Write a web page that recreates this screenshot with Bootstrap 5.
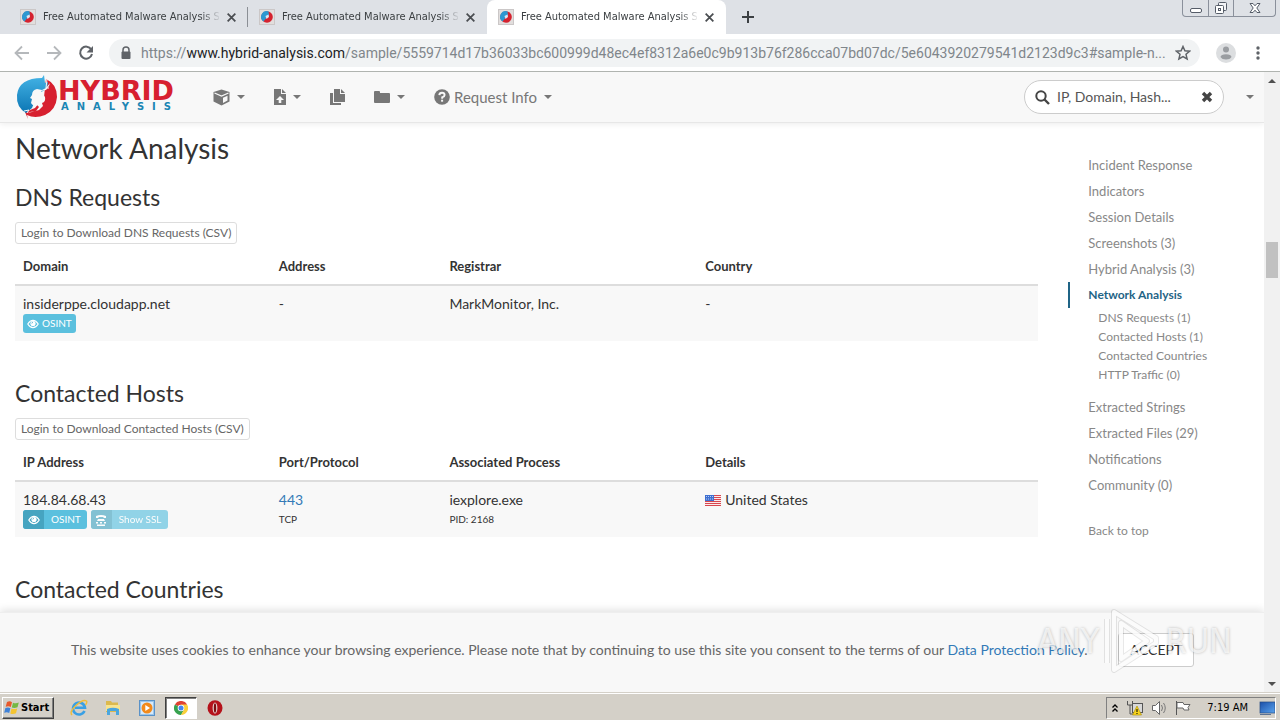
<!DOCTYPE html>
<html lang="en">
<head>
<meta charset="utf-8">
<meta name="viewport" content="width=device-width, initial-scale=1">
<title>Free Automated Malware Analysis Service</title>
<link href="https://cdn.jsdelivr.net/npm/bootstrap@5.3.0/dist/css/bootstrap.min.css" rel="stylesheet">
<style>
  body { font-family: Lato, "Open Sans", sans-serif; font-size: 14px; line-height: 20px; color: #333; background: #fff; }
  button { font-family: inherit; }
  svg { display: block; flex: none; }
  .plain { background: none; border: 0; padding: 0; color: inherit; }

  /* browser tabs */
  .tabstrip { height: 34px; background: #dee1e6; padding-left: 9px; font: 11px/16px "DejaVu Sans Condensed", "DejaVu Sans", sans-serif; color: #3c4043; }
  .browser-tab { width: 239px; padding: 0 11px; gap: 7px; }
  .browser-tab.current { background: #fff; border-radius: 8px 8px 0 0; }
  .divider { background: linear-gradient(#8b8f95, #8b8f95) right center / 1px 20px no-repeat; }
  .tab-title { flex: 1 1 0; min-width: 0; overflow: hidden; white-space: nowrap; -webkit-mask-image: linear-gradient(90deg, #000 158px, transparent 178px); mask-image: linear-gradient(90deg, #000 158px, transparent 178px); }
  .window-buttons { height: 17px; margin-right: 4px; border: 1px solid #8a909b; border-top: 0; border-radius: 0 0 4px 4px; }
  .window-buttons button { width: 25px; }
  .window-buttons button + button { border-left: 1px solid #8a909b; }
  .window-buttons button:last-child { width: 42px; }

  /* address bar */
  .toolbar { height: 38px; border-bottom: 1px solid #b0b4b0; padding: 0 16px 0 14px; gap: 16px; }
  .omnibox { flex: 1 1 0; min-width: 0; height: 28px; border-radius: 14px; background: #f1f3f4; padding: 0 9px 0 11px; gap: 9px; margin-left: -1px; }
  .url { flex: 1 1 0; min-width: 0; overflow: hidden; white-space: nowrap; font: 14px/20px Roboto, sans-serif; color: #80868b; text-decoration: none; }
  .url b { font-weight: 400; color: #202124; }

  /* site header */
  .site-header { height: 51px; background: #f8f8f8; border-bottom: 1px solid #e7e7e7; box-shadow: 0 1px 6px rgba(0,0,0,.08); padding: 0 10px 0 15px; color: #777; position: relative; }
  .wordmark { font-family: "DejaVu Sans", sans-serif; font-weight: 700; width: 122px; }
  .word-top { font-size: 27px; line-height: 20px; color: #d7202f; }
  .word-bottom { font-size: 10px; line-height: 12px; letter-spacing: 8px; color: #1b86b4; padding-left: 3px; }
  .menu { gap: 29px; margin-left: 33px; }
  .menu button, .more { display: flex; align-items: center; font-size: 15px; line-height: 20px; }
  .dropdown-toggle::after { border-top-width: 4px; border-left-width: 4px; border-right-width: 4px; margin-left: 7px; vertical-align: middle; }
  .more::after { margin-left: 0; }
  .search { width: 200px; height: 34px; border: 1px solid #ccc; border-radius: 17px; background: #fff; padding: 0 10px; gap: 7px; margin-right: 22px; color: #444; }
  .search input { flex: 1 1 0; min-width: 0; border: 0; outline: 0; padding: 0; font-size: 14px; color: #555; background: none; }
  .search input::placeholder { color: #555; }

  /* page */
  .gutters { --bs-gutter-x: 30px; }
  h2 { font-size: 28px; line-height: 33px; font-weight: 400; margin: 9px 0 19px; }
  h3 { font-size: 23px; line-height: 26px; font-weight: 400; margin: 0 0 12px; }
  .csv { display: block; font-size: 12px; line-height: 18px; color: #666; background: #fff; border: 1px solid #ddd; border-radius: 3px; padding: 1px 5px; }
  .data { width: 100%; table-layout: fixed; margin: 4px 0 39px; }
  .data th, .data td { padding: 8px; vertical-align: top; }
  .data th { border-bottom: 2px solid #ddd; font-size: 13px; font-weight: 700; }
  .data td { background: #f8f8f8; }
  .data small { display: block; font-size: 10px; line-height: 19px; }
  .c2 { width: 16.6667%; } .c3 { width: 25%; } .c4 { width: 33.3333%; }
  .tag { display: flex; align-items: center; height: 19px; border-radius: 3px; background: #5bc0de; color: #fff; font-size: 10px; line-height: 19px; padding: 0 6px; gap: 3px; overflow: hidden; }
  .tag.split { padding-left: 0; gap: 7px; }
  .tag.split span { display: flex; align-items: center; justify-content: center; width: 21px; height: 19px; background: #46a4c0; }
  .tag:disabled { opacity: .65; }
  a { color: #337ab7; text-decoration: none; }

  .toc { padding-top: 29px; font-size: 13px; line-height: 26px; }
  .toc a { display: block; color: #888; padding-left: 20px; }
  .toc .here { color: #1f6486; border-left: 2px solid #1f6486; padding-left: 18px; font-weight: 700; font-size: 12px; }
  .toc .sub a { font-size: 12px; line-height: 19px; padding-left: 30px; }
  .toc .sub { margin-bottom: 10px; }
  .toc .top { font-size: 12px; margin-top: 20px; }

  .cookies { left: 0; right: 0; bottom: 0; height: 80px; background: #f8f8f8; border-top: 1px solid #eee; box-shadow: 0 -2px 8px rgba(0,0,0,.12); padding: 0 70px 6px 71px; color: #666; white-space: nowrap; }
  .cookies button { width: 76px; height: 34px; font-size: 14px; color: #333; background: #fff; border: 1px solid #ccc; border-radius: 3px; }
  .watermark { right: 32px; bottom: 18px; height: 66px; gap: 5px; color: rgba(255,255,255,.7); font: 34px/66px "Liberation Sans Narrow", "DejaVu Sans Condensed", sans-serif; text-shadow: 0 0 3px rgba(0,0,0,.25); pointer-events: none; }

  .scroller { width: 16px; background: #f1f1f1; }
  .scroller .arrow { height: 17px; }
  .thumb { height: 36px; background: #c1c1c1; margin: 0 2px; }
  .track-above { flex: 153 0 0; } .track-below { flex: 397 0 0; }

  /* taskbar */
  .taskbar { height: 28px; background: #d4d0c8; border-top: 1px solid #d4d0c8; box-shadow: inset 0 1px 0 #fff; padding: 3px 4px 1px 2px; font: 11px/16px "DejaVu Sans Condensed", sans-serif; color: #000; }
  .start { height: 22px; width: 52px; gap: 1px; font-weight: 700; border: 1px solid; border-color: #fff #404040 #404040 #fff; box-shadow: inset -1px -1px 0 #808080; padding: 0 1px; }
  .quick { margin-left: 8px; }
  .quick button { width: 34px; height: 22px; }
  .quick .running { width: 32px; background: #fff; border: 1px solid; border-color: #404040 #fff #fff #404040; box-shadow: inset 1px 1px 0 #808080; margin: 0 1px; }
  .tray { height: 22px; border: 1px solid; border-color: #808080 #fff #fff #808080; padding: 0 0 0 4px; gap: 7px; }
</style>
<script src="https://cdn.jsdelivr.net/npm/bootstrap@5.3.0/dist/js/bootstrap.bundle.min.js"></script>
</head>
<body>
<svg width="0" height="0" class="position-absolute" aria-hidden="true">
  <defs>
    <linearGradient id="blue" x1="0" y1="0" x2="0" y2="1"><stop offset="0" stop-color="#45b4e6"/><stop offset="1" stop-color="#0c76b4"/></linearGradient>
    <linearGradient id="screen" x1="0" y1="0" x2="1" y2="1"><stop offset="0" stop-color="#1c4fa8"/><stop offset="1" stop-color="#5aa4ee"/></linearGradient>
    <symbol id="fav" viewBox="0 0 16 16"><rect x=".5" y=".5" width="15" height="15" fill="#e2dedd" stroke="#cbc7c7"/><circle cx="8" cy="8" r="5.800" fill="#d5222f"/><path d="M9.500 2.300A5.800 5.800 0 0 0 4.500 12.600L6.500 10 8 8l2-1.500z" fill="#2c98d2"/><path d="M6.500 7l3-1.500.5 2.500-2.500 2z" fill="#dbe4f2"/></symbol>
    <symbol id="x" viewBox="0 0 10 10"><path d="M1.500 1.500l7 7M8.500 1.500l-7 7" stroke="#4a4d51" stroke-width="1.600"/></symbol>
    <symbol id="eye" viewBox="0 0 12 10"><path d="M.8 5Q3 1.300 6 1.300T11.200 5Q9 8.700 6 8.700T.8 5z" fill="none" stroke="#fff" stroke-width="1.200"/><circle cx="6" cy="4.500" r="2.600" fill="#fff"/><path d="M4.800 4.500A1.300 1.300 0 0 1 6 3.200" fill="none" stroke="#4aa9c6" stroke-width=".8"/></symbol>
  </defs>
</svg>
<div class="d-flex flex-column vh-100 overflow-hidden">
  <div class="tabstrip d-flex">
    <div class="browser-tab divider d-flex align-items-center"><svg width="16" height="16"><use href="#fav"/></svg><span class="tab-title">Free Automated Malware Analysis Service</span><button class="plain" aria-label="Close tab"><svg width="11" height="11"><use href="#x"/></svg></button></div>
    <div class="browser-tab d-flex align-items-center"><svg width="16" height="16"><use href="#fav"/></svg><span class="tab-title">Free Automated Malware Analysis Service</span><button class="plain" aria-label="Close tab"><svg width="11" height="11"><use href="#x"/></svg></button></div>
    <div class="browser-tab current d-flex align-items-center"><svg width="16" height="16"><use href="#fav"/></svg><span class="tab-title">Free Automated Malware Analysis Service</span><button class="plain" aria-label="Close tab"><svg width="11" height="11"><use href="#x"/></svg></button></div>
    <button class="plain ms-3" aria-label="New tab"><svg width="12" height="12" viewBox="0 0 12 12"><path d="M6 0v12M0 6h12" stroke="#3c4043" stroke-width="2"/></svg></button>
    <div class="window-buttons d-flex ms-auto">
      <button class="plain d-flex justify-content-center" aria-label="Minimize"><svg width="14" height="16" viewBox="0 0 14 16"><rect x="1.500" y="8.500" width="11" height="4" rx="1.500" fill="#fff" stroke="#555c68"/></svg></button>
      <button class="plain d-flex justify-content-center" aria-label="Restore"><svg width="14" height="16" viewBox="0 0 14 16"><rect x="4.500" y="2.500" width="8" height="8" rx="1" fill="#f2f3f6" stroke="#555c68"/><rect x="1.500" y="5.500" width="8" height="8" rx="1" fill="#fff" stroke="#555c68"/><rect x="4.500" y="8.500" width="2" height="2" fill="none" stroke="#555c68"/></svg></button>
      <button class="plain d-flex justify-content-center" aria-label="Close"><svg width="14" height="16" viewBox="0 0 14 16"><path d="M2 3.500h3l2 2.300 2-2.300h3L8.800 8l3.200 4.500H9L7 10.200 5 12.500H2L5.200 8z" fill="#fff" stroke="#555c68"/></svg></button>
    </div>
  </div>

  <div class="toolbar d-flex align-items-center">
    <button class="plain" aria-label="Back"><svg width="16" height="16" viewBox="0 0 16 16"><path d="M15 8H2M8 1.500L1.500 8 8 14.500" fill="none" stroke="#b5b8bb" stroke-width="1.800"/></svg></button>
    <button class="plain" aria-label="Forward"><svg width="16" height="16" viewBox="0 0 16 16"><path d="M1 8h13M8 1.500L14.500 8 8 14.500" fill="none" stroke="#b5b8bb" stroke-width="1.800"/></svg></button>
    <button class="plain" aria-label="Reload"><svg width="16" height="16" viewBox="0 0 16 16"><path d="M13.300 4.500A6 6 0 1 0 14 9" fill="none" stroke="#5f6368" stroke-width="2"/><path d="M15 1v6.500H8.500z" fill="#5f6368"/></svg></button>
    <div class="omnibox d-flex align-items-center">
      <svg width="12" height="14" viewBox="0 0 12 14"><path d="M3 6V4a3 3 0 0 1 6 0v2" fill="none" stroke="#5f6368" stroke-width="1.500"/><rect x="1.500" y="5.500" width="9" height="7.500" rx="1" fill="#5f6368"/></svg>
      <a class="url" href="#">https://<b>www.hybrid-analysis.com</b>/sample/5559714d17b36033bc600999d48ec4ef8312a6e0c9b913b76f286cca07bd07dc/5e6043920279541d2123d9c3#sample-n...</a>
      <button class="plain" aria-label="Bookmark"><svg width="16" height="16" viewBox="0 0 16 16"><path d="M8 1.500l1.900 4.300 4.700.4-3.600 3.100 1.100 4.600L8 11.500l-4.100 2.400L5 9.300 1.400 6.200l4.700-.4z" fill="none" stroke="#5f6368" stroke-width="1.500"/></svg></button>
    </div>
    <button class="plain ms-n1" aria-label="Profile"><svg width="20" height="20" viewBox="0 0 20 20"><circle cx="10" cy="10" r="10" fill="#dcdee0"/><circle cx="10" cy="6.500" r="3" fill="#9a9da1"/><path d="M4.500 14Q5 11.200 10 11.200T15.500 14Q14 16.500 10 16.500T4.500 14z" fill="#9a9da1"/></svg></button>
    <button class="plain" aria-label="Menu"><svg width="12" height="16" viewBox="0 0 12 16"><g fill="#5f6368"><circle cx="6" cy="3" r="1.700"/><circle cx="6" cy="8" r="1.700"/><circle cx="6" cy="13" r="1.700"/></g></svg></button>
  </div>

  <div class="d-flex flex-grow-1 overflow-hidden">
    <div class="flex-grow-1 position-relative overflow-hidden">
      <header class="site-header d-flex align-items-center">
        <a href="#" class="d-flex align-items-center" aria-label="Hybrid Analysis">
          <svg width="43" height="44" viewBox="0 0 43 44"><path d="M31 4Q42 9 42 22 41 35 30 40 20 44 12 40L13 44 10 37 20 33 29 22z" fill="#d7202f"/><path d="M29 0l1 8 3-1-1 7-6 3-5 6-4 10-6 5Q1 32 2 20 4 3 27 3z" fill="url(#blue)"/><path d="M31 13l-4 2-5-1q-5 1-5 6l-2 3 2 1-1 4q1 3 6 2l2 2-3 4-6 1-3 1 5-1 7-2 4-4-1-3q4-1 3-6l-4-6 5-1 3-4 1-3z" fill="#f8f8f8"/><path d="M32 4l-1 9 3 0M12 38l2-3-5 1" fill="none" stroke="#f8f8f8"/></svg>
          <span class="wordmark d-flex flex-column"><span class="word-top">HYBRID</span><span class="word-bottom">ANALYSIS</span></span>
        </a>
        <nav class="menu d-flex align-items-center">
          <button class="plain dropdown-toggle" aria-label="Samples"><svg width="17" height="17" viewBox="0 0 17 17"><path d="M8.500.5L16.500 3v9.500L8.500 16.500.5 12.500V3z" fill="#777"/><path d="M1.500 4L8.500 7l7-3" fill="none" stroke="#f8f8f8" stroke-width="1.300"/><path d="M10 8.800l4.500-2v4.800L10 14z" fill="#f8f8f8"/></svg></button>
          <button class="plain dropdown-toggle" aria-label="Submit"><svg width="12" height="16" viewBox="0 0 12 16"><path d="M0 0h7v5h5v11H0z" fill="#777"/><path d="M8 0l4 4H8z" fill="#777"/><path d="M6 7l4 4H7.300v3H4.700v-3H2z" fill="#f8f8f8"/></svg></button>
          <button class="plain" aria-label="Reports"><svg width="15" height="17" viewBox="0 0 15 17"><path d="M4 0h6v5h5v8H4z" fill="#777"/><path d="M11 0L15 4H11zM0 4h3v10h8v2H0z" fill="#777"/></svg></button>
          <button class="plain dropdown-toggle" aria-label="Collections"><svg width="16" height="14" viewBox="0 0 16 14"><path d="M0 2q0-1 1-1h4q1 0 1 1v1h9q1 0 1 1v8q0 1-1 1H1q-1 0-1-1z" fill="#777"/></svg></button>
          <button class="plain dropdown-toggle"><svg class="me-1" width="16" height="16" viewBox="0 0 16 16"><circle cx="8" cy="8" r="7.800" fill="#777"/><path d="M5.300 6.200Q5.500 3.800 8 3.800t2.600 2.200Q10.600 7.500 8.200 8.300v1.400" fill="none" stroke="#f8f8f8" stroke-width="1.900"/><rect x="7.100" y="10.700" width="2" height="2" fill="#f8f8f8"/></svg>Request Info</button>
        </nav>
        <div class="d-flex align-items-center ms-auto">
          <form class="search d-flex align-items-center">
            <svg width="15" height="15" viewBox="0 0 15 15"><circle cx="6" cy="6" r="4.700" fill="none" stroke="#444" stroke-width="2"/><path d="M9.500 9.500l4.500 4.500" stroke="#444" stroke-width="2.400"/></svg>
            <input type="text" placeholder="IP, Domain, Hash..." aria-label="Search">
            <button type="button" class="plain" aria-label="Clear"><svg width="12" height="12" viewBox="0 0 12 12"><path d="M2 2l8 8M10 2l-8 8" stroke="#444" stroke-width="3.400"/></svg></button>
          </form>
          <button class="plain dropdown-toggle more" aria-label="More"></button>
        </div>
      </header>

      <div class="container-fluid gutters">
        <div class="row gutters">
          <main class="col-10">
            <h2>Network Analysis</h2>
            <h3>DNS Requests</h3>
            <button class="csv">Login to Download DNS Requests (CSV)</button>
            <table class="data">
              <thead><tr><th class="c3">Domain</th><th class="c2">Address</th><th class="c3">Registrar</th><th class="c4">Country</th></tr></thead>
              <tbody><tr><td>insiderppe.cloudapp.net<button class="plain tag px-1"><svg width="12" height="10"><use href="#eye"/></svg>OSINT</button></td><td>-</td><td>MarkMonitor, Inc.</td><td>-</td></tr></tbody>
            </table>
            <h3>Contacted Hosts</h3>
            <button class="csv">Login to Download Contacted Hosts (CSV)</button>
            <table class="data">
              <thead><tr><th class="c3">IP Address</th><th class="c2">Port/Protocol</th><th class="c3">Associated Process</th><th class="c4">Details</th></tr></thead>
              <tbody><tr>
                <td>184.84.68.43<div class="d-flex gap-1"><button class="tag split border-0"><span><svg width="12" height="10"><use href="#eye"/></svg></span>OSINT</button><button class="tag split border-0" disabled><span><svg width="12" height="12" viewBox="0 0 12 12"><path d="M1 4V2q5-2 10 0v2H8.500V3h-5v1zM3 5h6l1 2H2zM1 8h2v1.500H1zM5 8h2v1.500H5zM9 8h2v1.500H9zM2 10.500h8V12H2z" fill="#fff"/></svg></span>Show SSL</button></div></td>
                <td><a href="#">443</a><small>TCP</small></td>
                <td>iexplore.exe<small>PID: 2168</small></td>
                <td><div class="d-flex align-items-center"><svg class="me-1" width="16" height="11" viewBox="0 0 16 11"><rect width="16" height="11" fill="#fbe9ea"/><path d="M0 .5h16M0 2.500h16M0 4.500h16M0 6.500h16M0 8.500h16M0 10.500h16" stroke="#d8474f"/><rect x="0" y="0" width="9" height="6" fill="#3e6fd0"/><path d="M1 1.500h7M1 4h7" stroke="#b6ccf5" stroke-dasharray="1 1"/></svg>United States</div></td>
              </tr></tbody>
            </table>
            <h3>Contacted Countries</h3>
          </main>
          <nav class="col-2 toc">
            <a href="#">Incident Response</a><a href="#">Indicators</a><a href="#">Session Details</a><a href="#">Screenshots (3)</a><a href="#">Hybrid Analysis (3)</a>
            <a href="#" class="here">Network Analysis</a>
            <div class="sub"><a href="#">DNS Requests (1)</a><a href="#">Contacted Hosts (1)</a><a href="#">Contacted Countries</a><a href="#">HTTP Traffic (0)</a></div>
            <a href="#">Extracted Strings</a><a href="#">Extracted Files (29)</a><a href="#">Notifications</a><a href="#">Community (0)</a>
            <a href="#" class="top">Back to top</a>
          </nav>
        </div>
      </div>

      <div class="cookies position-absolute d-flex align-items-center justify-content-between">
        <span>This website uses cookies to enhance your browsing experience. Please note that by continuing to use this site you consent to the terms of our <a href="#">Data Protection Policy</a>.</span>
        <button>ACCEPT</button>
      </div>
      <div class="watermark position-absolute d-flex align-items-center">
        <span>ANY</span>
        <svg width="56" height="64" viewBox="0 0 56 64"><path d="M10 3L52 29v5L10 61zM17 14v36L43 32zM3 10v44" fill="none" stroke="#000" stroke-opacity=".09" stroke-width="6" stroke-linejoin="round"/><path d="M10 3L52 29v5L10 61zM17 14v36L43 32zM3 10v44" fill="none" stroke="#fff" stroke-opacity=".85" stroke-width="4" stroke-linejoin="round"/></svg>
        <span>RUN</span>
      </div>
    </div>
    <div class="scroller d-flex flex-column flex-shrink-0">
      <div class="arrow d-flex align-items-center justify-content-center"><svg width="8" height="4" viewBox="0 0 8 4"><path d="M0 4L4 0l4 4z" fill="#505050"/></svg></div>
      <div class="track-above"></div><div class="thumb"></div><div class="track-below"></div>
      <div class="arrow d-flex align-items-center justify-content-center"><svg width="8" height="4" viewBox="0 0 8 4"><path d="M0 0l4 4 4-4z" fill="#505050"/></svg></div>
    </div>
  </div>

  <div class="taskbar d-flex align-items-center">
    <button class="plain start d-flex align-items-center"><svg width="16" height="16" viewBox="0 0 16 16"><path d="M3 2q3-1.500 5 .3L6.800 7Q4.500 5.500 1.700 6.800z" fill="#e8592b"/><path d="M9 2.800q3 1.200 5.800-.3L13.500 7.200Q10.500 8.500 7.800 7.500z" fill="#74b843"/><path d="M1.400 8q2.600-1.300 5 .2L5.200 13Q3 11.500.2 12.800z" fill="#3f82d8"/><path d="M7.500 8.600q3 1.100 5.700-.2L12 13.200Q9 14.500 6.300 13.400z" fill="#f4c430"/></svg>Start</button>
    <div class="quick d-flex align-items-center">
      <button class="plain d-flex align-items-center justify-content-center" aria-label="Internet Explorer"><svg width="18" height="18" viewBox="0 0 18 18"><path d="M14.500 12A6 6 0 1 1 15 8.800H5" fill="none" stroke="#3aa0e4" stroke-width="2.600"/><path d="M2 16Q-1 13 6 6.500T16.500 2Q17.500 3.500 15.500 6" fill="none" stroke="#f0bd3a" stroke-width="1.400"/></svg></button>
      <button class="plain d-flex align-items-center justify-content-center" aria-label="Explorer"><svg width="16" height="16" viewBox="0 0 16 16"><path d="M1 1h5l1 1.500h6V12H1z" fill="#dcb94e"/><path d="M1 5h14v6H1z" fill="#f8e48f"/><path d="M2 9q6-2.500 12 0v6h-3v-4H5v4H2z" fill="#4ba6de"/></svg></button>
      <button class="plain d-flex align-items-center justify-content-center" aria-label="Media Player"><svg width="16" height="16" viewBox="0 0 16 16"><rect x=".5" y=".5" width="15" height="15" fill="#9bc6ec" stroke="#5a92c8"/><rect x="2" y="2" width="12" height="12" fill="#d7eafb"/><circle cx="8" cy="8" r="5.500" fill="#f28a1c"/><path d="M6.300 5l4.700 3-4.700 3z" fill="#fff"/></svg></button>
      <button class="plain running d-flex align-items-center justify-content-center" aria-label="Chrome"><svg width="14" height="14" viewBox="0 0 14 14"><path d="M7 7L.9 3.500A7 7 0 0 1 13.100 3.500z" fill="#df4234"/><path d="M7 7L.9 3.500A7 7 0 0 0 7 14l3-5z" fill="#37a24f"/><path d="M7 3.500h6.100A7 7 0 0 1 7 14l3-5.500z" fill="#f9cf3a"/><circle cx="7" cy="7" r="3.300" fill="#fff"/><circle cx="7" cy="7" r="2.500" fill="#4385f0"/></svg></button>
      <button class="plain d-flex align-items-center justify-content-center" aria-label="Opera"><svg width="16" height="16" viewBox="0 0 16 16"><ellipse cx="8" cy="8" rx="7.500" ry="7.800" fill="#b5121b"/><ellipse cx="8" cy="8" rx="2.400" ry="5.500" fill="#e9d5d3"/><ellipse cx="8" cy="8" rx="1.200" ry="4.800" fill="#7a0c10"/></svg></button>
    </div>
    <div class="tray d-flex align-items-center ms-auto">
      <button class="plain" aria-label="Show hidden icons"><svg width="8" height="10" viewBox="0 0 8 10"><path d="M1.500 4.500L4 2l2.500 2.500M1.500 8.500L4 6l2.500 2.500" fill="none" stroke="#000" stroke-width="1.300"/></svg></button>
      <svg width="18" height="16" viewBox="0 0 18 16"><path d="M1.500 1v4h5V1M4 5v9h4" fill="none" stroke="#555"/><rect x="6.500" y="3.500" width="10" height="9" fill="#d8d8d8" stroke="#555"/><path d="M11 6l4.500 9h-9z" fill="#f8d41c" stroke="#a88a00" stroke-width=".6"/><path d="M11 9v3M11 13v1" stroke="#000"/></svg>
      <svg width="17" height="16" viewBox="0 0 16 16"><path d="M1 5.500h3l4-4v13l-4-4H1z" fill="#fff" stroke="#666"/><path d="M10 5q2 3 0 6M12 3q3.500 5 0 10" fill="none" stroke="#777"/></svg>
      <svg width="17" height="16" viewBox="0 0 17 16"><path d="M1.500 1v14" stroke="#555"/><path d="M2 2.500h6l1 2h6l-2 3 1 2.500H9l-1-2H2z" fill="#fff" stroke="#666"/></svg>
      <span class="ps-2 pe-1">7:19 AM</span>
      <svg width="16" height="16" viewBox="0 0 16 16"><rect x="1" y="2" width="15" height="11" fill="url(#screen)" stroke="#234a84" stroke-width=".7"/><path d="M1 14.500h11" stroke="#5d7393"/></svg>
    </div>
  </div>
</div>
</body>
</html>
